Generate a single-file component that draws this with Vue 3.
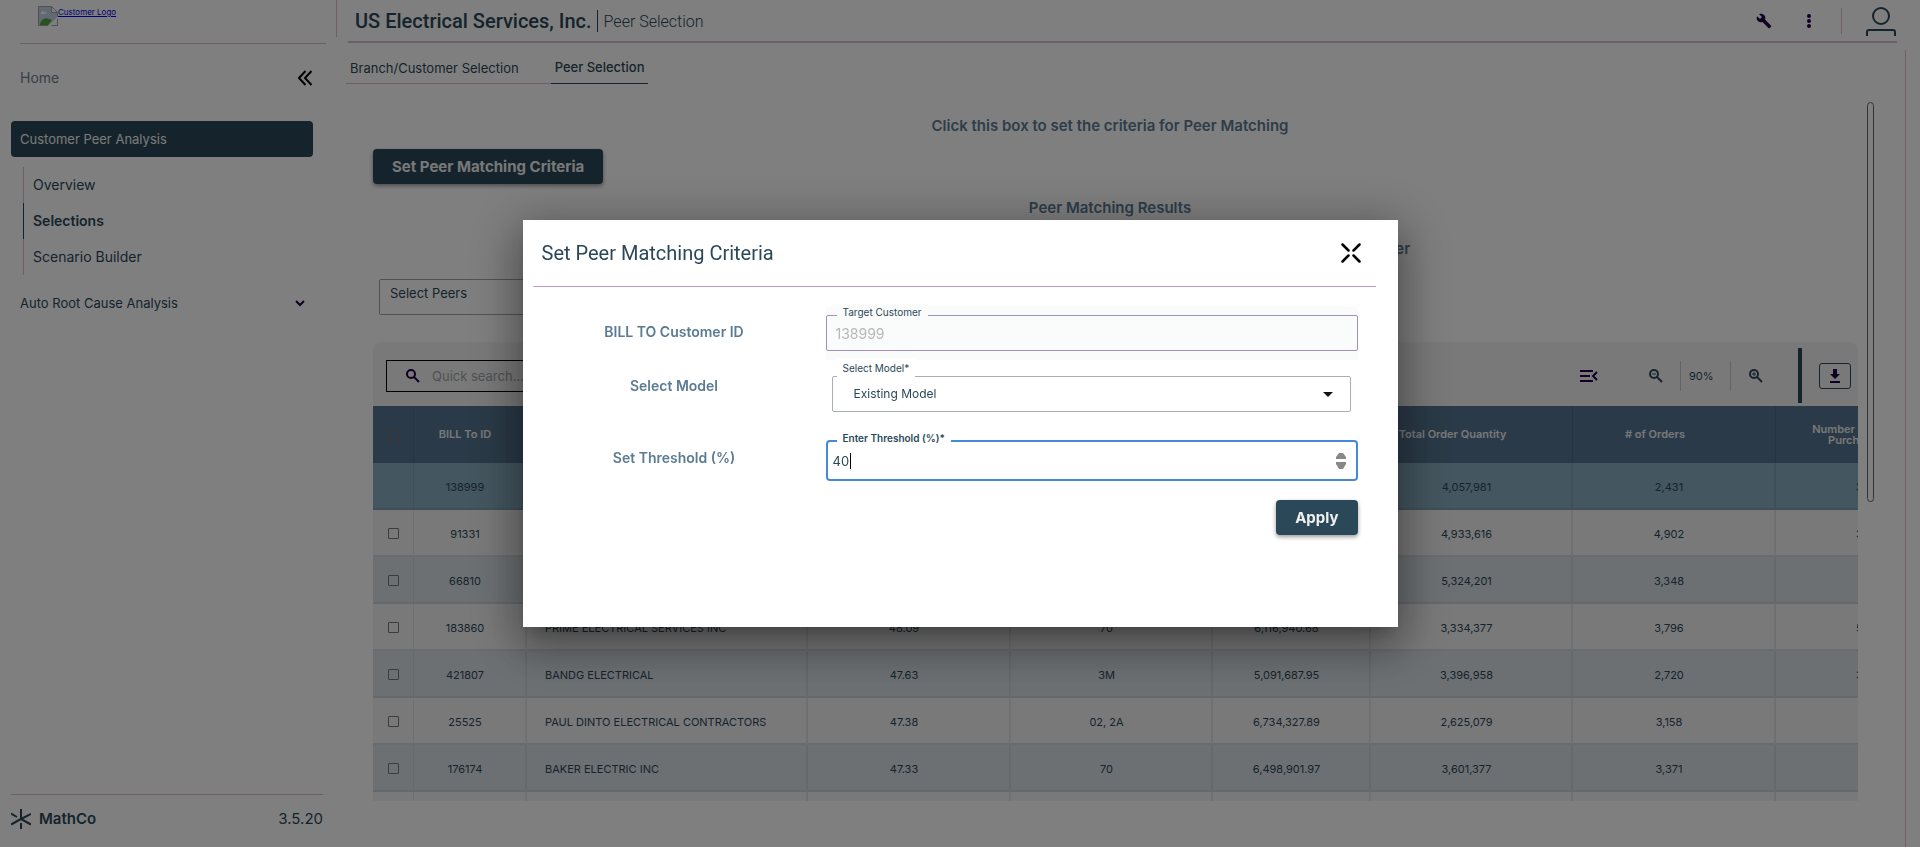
<script setup>
import { ref } from 'vue'

const pages = ['Overview', 'Selections', 'Scenario Builder']
const activePage = 'Selections'

const columns = [
  { key: 'id', label: 'BILL To ID' },
  { key: 'name', label: 'Customer Name' },
  { key: 'score', label: 'Similarity Score' },
  { key: 'branch', label: 'Branch' },
  { key: 'sales', label: 'Total Sales' },
  { key: 'quantity', label: 'Total Order Quantity' },
  { key: 'orders', label: '# of Orders' },
  { key: 'items', label: 'Number of Items Purchased' },
]

const rows = [
  { id: '138999', name: 'TARGET CUSTOMER', score: '', branch: '70', sales: '6,902,114.20', quantity: '4,057,981', orders: '2,431', items: '3,640', target: true },
  { id: '91331', name: 'ELECTRICAL SERVICES', score: '48.61', branch: '70', sales: '6,514,380.12', quantity: '4,933,616', orders: '4,902', items: '3,028' },
  { id: '66810', name: 'ELECTRICAL CONTRACTORS', score: '48.20', branch: '3M', sales: '5,880,417.53', quantity: '5,324,201', orders: '3,348', items: '984' },
  { id: '183860', name: 'PRIME ELECTRICAL SERVICES INC', score: '48.09', branch: '70', sales: '6,116,940.68', quantity: '3,334,377', orders: '3,796', items: '5,240' },
  { id: '421807', name: 'BANDG ELECTRICAL', score: '47.63', branch: '3M', sales: '5,091,687.95', quantity: '3,396,958', orders: '2,720', items: '3,062' },
  { id: '25525', name: 'PAUL DINTO ELECTRICAL CONTRACTORS', score: '47.38', branch: '02, 2A', sales: '6,734,327.89', quantity: '2,625,079', orders: '3,158', items: '917' },
  { id: '176174', name: 'BAKER ELECTRIC INC', score: '47.33', branch: '70', sales: '6,498,901.97', quantity: '3,601,377', orders: '3,371', items: '952' },
  { id: '', name: '', score: '', branch: '', sales: '', quantity: '', orders: '', items: '' },
]

const customer = ref('138999')
const model = ref('Existing Model')
const threshold = ref(40)
</script>

<template>
  <div class="app">
    <aside class="sidebar">
      <div class="brand">
        <a href="#" class="brand-link">
          <svg width="20" height="20" viewBox="0 0 20 20" aria-hidden="true">
            <path d="M.5.5h13l6 6v6l-7 7H.5z" fill="#c3d3ea" stroke="#a0a0a0" />
            <path d="M13.5.5v6h6z" fill="#fff" stroke="#a0a0a0" />
            <path d="M3 7c0-2 3-2 3-1 2-1 3 1 2 2H3z" fill="#fff" />
            <path d="M2 18c1-4 5-7 9-5l3 1-4 5H2z" fill="#4fa83a" />
            <path d="M20 10 10 20h10z" fill="#fff" />
            <path d="M19.5 13v6.500h-6" fill="none" stroke="#a0a0a0" />
          </svg>
          <span>Customer Logo</span>
        </a>
      </div>

      <nav class="nav">
        <div class="nav-home">
          <a href="#">Home</a>
          <button type="button" class="bare" aria-label="Collapse menu">
            <svg width="16" height="16" viewBox="0 0 16 16" fill="none" stroke="#000" stroke-width="2">
              <path d="M8.500 1 2 8l6.500 7M14.500 1 8 8l6.500 7" />
            </svg>
          </button>
        </div>
        <button type="button" class="nav-section">Customer Peer Analysis</button>
        <ul class="nav-list">
          <li v-for="page in pages" :key="page" :class="{ active: page === activePage }">
            <a href="#">{{ page }}</a>
          </li>
        </ul>
        <button type="button" class="nav-collapsed">
          <span>Auto Root Cause Analysis</span>
          <svg width="10" height="10" viewBox="0 0 10 10" fill="none" stroke="#220047" stroke-width="2">
            <path d="m1 3 4 4 4-4" />
          </svg>
        </button>
      </nav>

      <footer class="side-footer">
        <svg width="20" height="20" viewBox="0 0 20 20" fill="none" stroke="#2b4858" stroke-width="2">
          <path d="M10 0v10M10 14v6M10 10 0 15.500M10 10l10-5M10 10l10 5.500M0 4.500l6 3.500" />
        </svg>
        <strong>MathCo</strong>
        <span class="version">3.5.20</span>
      </footer>
    </aside>

    <div class="page">
      <header class="topbar">
        <h1>US Electrical Services, Inc.</h1>
        <span class="crumb">Peer Selection</span>
        <div class="top-actions">
          <button type="button" class="bare" aria-label="Settings">
            <svg width="16" height="16" viewBox="0 0 24 24" fill="#220047">
              <path d="m22.700 19-9.100-9.100c.9-2.300.4-5-1.500-6.900-2-2-5-2.400-7.400-1.300L9 6 6 9 1.600 4.700C.4 7.100.9 10.100 2.900 12.100c1.900 1.900 4.600 2.400 6.900 1.500l9.100 9.100c.4.4 1 .4 1.400 0l2.300-2.300c.5-.4.5-1.100.1-1.400z" />
            </svg>
          </button>
          <button type="button" class="bare" aria-label="More">
            <svg width="16" height="16" viewBox="0 0 16 16" fill="#220047">
              <circle cx="8" cy="3" r="2" /><circle cx="8" cy="8" r="2" /><circle cx="8" cy="13" r="2" />
            </svg>
          </button>
          <span class="divider"></span>
          <button type="button" class="bare" aria-label="Account">
            <svg width="30" height="30" viewBox="0 0 30 30" fill="none" stroke="#2b4858" stroke-width="2">
              <circle cx="15" cy="10" r="8" /><path d="M1 30v-4q0-2 2-2h24q2 0 2 2v4" />
            </svg>
          </button>
        </div>
      </header>

      <main class="body">
        <div class="content">
          <nav class="tabs">
            <a href="#">Branch/Customer Selection</a>
            <a href="#" class="active">Peer Selection</a>
          </nav>

          <section class="peer">
            <h2 class="hint">Click this box to set the criteria for Peer Matching</h2>
            <button type="button" class="primary">Set Peer Matching Criteria</button>
            <h2 class="results">Peer Matching Results</h2>
            <p class="note">Select the peers from the table below to compare them against the target customer</p>
            <button type="button" class="peer-select">Select Peers</button>

            <div class="panel">
              <div class="toolbar">
                <label class="search">
                  <svg width="14" height="14" viewBox="0 0 14 14" fill="none" stroke="#220047" stroke-width="2">
                    <circle cx="5" cy="5" r="4" /><path d="m8 8 5 5" />
                  </svg>
                  <input type="search" placeholder="Quick search..." aria-label="Quick search" />
                </label>
                <button type="button" class="bare menu-icon" aria-label="Columns">
                  <svg width="18" height="14" viewBox="0 0 18 14" fill="none" stroke="#220047" stroke-width="2">
                    <path d="M0 2h13M0 7h10M0 12h13M17 3l-4 4 4 4" />
                  </svg>
                </button>
                <button type="button" class="bare zoom-out" aria-label="Zoom out">
                  <svg width="14" height="14" viewBox="0 0 14 14" fill="none" stroke="#2b4858" stroke-width="2">
                    <circle cx="5" cy="5" r="4" /><path d="m8 8 5 5" /><path d="M3 5h4" stroke-width="1" />
                  </svg>
                </button>
                <span class="zoom-level">90%</span>
                <button type="button" class="bare zoom-in" aria-label="Zoom in">
                  <svg width="14" height="14" viewBox="0 0 14 14" fill="none" stroke="#2b4858" stroke-width="2">
                    <circle cx="5" cy="5" r="4" /><path d="m8 8 5 5" /><path d="M3 5h4M5 3v4" stroke-width="1" />
                  </svg>
                </button>
                <span class="bar"></span>
                <button type="button" class="download" aria-label="Download">
                  <svg width="12" height="14" viewBox="0 0 12 14" fill="#220047">
                    <path d="M4 0h4v5h3l-5 5-5-5h3zM1 12h10v2H1z" />
                  </svg>
                </button>
              </div>

              <div class="table-wrap">
                <table>
                  <colgroup>
                    <col class="c-check" />
                    <col v-for="c in columns" :key="c.key" :class="'c-' + c.key" />
                  </colgroup>
                  <thead>
                    <tr>
                      <th class="check"><input type="checkbox" aria-label="Select all" /></th>
                      <th v-for="c in columns" :key="c.key" :class="c.key">{{ c.label }}</th>
                    </tr>
                  </thead>
                  <tbody>
                    <tr v-for="(row, i) in rows" :key="i" :class="{ target: row.target }">
                      <td class="check">
                        <input v-if="!row.target" type="checkbox" :aria-label="'Select ' + row.id" />
                      </td>
                      <td v-for="c in columns" :key="c.key" :class="c.key">{{ row[c.key] }}</td>
                    </tr>
                  </tbody>
                </table>
              </div>
            </div>
          </section>
        </div>
        <div class="scroll-track"><div class="scroll-thumb"></div></div>
      </main>
    </div>

    <div class="overlay">
      <form class="dialog" role="dialog" aria-labelledby="dialog-title" @submit.prevent>
        <header class="dialog-head">
          <h2 id="dialog-title">Set Peer Matching Criteria</h2>
          <button type="button" class="bare" aria-label="Close">
            <svg width="20" height="20" viewBox="0 0 20 20" fill="none" stroke="#000" stroke-width="2.500" stroke-linecap="round">
              <path d="m1.500 1.500 6 6M18.500 1.500l-6 6M1.500 18.500l6-6M18.500 18.500l-6-6" />
            </svg>
          </button>
        </header>

        <div class="row">
          <span class="row-name">BILL TO Customer ID</span>
          <div class="field disabled">
            <label for="customer">Target Customer</label>
            <input id="customer" v-model="customer" type="text" disabled />
          </div>
        </div>
        <div class="row">
          <span class="row-name">Select Model</span>
          <div class="field model">
            <label for="model">Select Model*</label>
            <select id="model" v-model="model">
              <option>Existing Model</option>
            </select>
            <svg class="arrow" width="10" height="5" viewBox="0 0 10 5" aria-hidden="true"><path d="M0 0h10L5 5z" fill="#111" /></svg>
          </div>
        </div>
        <div class="row last">
          <span class="row-name">Set Threshold (%)</span>
          <div class="field focused">
            <label for="threshold">Enter Threshold (%)*</label>
            <input id="threshold" v-model="threshold" type="number" />
            <span class="caret"></span>
            <svg class="spin" width="10" height="16" viewBox="0 0 10 16" aria-hidden="true">
              <path d="M0 6V4l3-4h4l3 4v2zM0 9h10v2l-3 5H3l-3-5z" fill="#888" />
            </svg>
          </div>
        </div>
        <div class="dialog-actions">
          <button type="submit" class="primary">Apply</button>
        </div>
      </form>
    </div>
  </div>
</template>

<style>
body {
  margin: 0;
  background: #fff;
}
</style>

<style scoped>
* {
  box-sizing: border-box;
}

.app {
  display: flex;
  height: 100vh;
  overflow: hidden;
  font-family: Inter, "Noto Sans", sans-serif;
  font-size: 13px;
  line-height: 20px;
  color: #2b4858;
}

h1, h2, p, ul {
  margin: 0;
  padding: 0;
}

a {
  color: inherit;
  text-decoration: none;
}

button, input, select {
  font: inherit;
  color: inherit;
}

button {
  cursor: pointer;
}

svg {
  display: block;
  flex: none;
}

.bare {
  display: flex;
  padding: 0;
  border: 0;
  background: none;
}

/* sidebar */
.sidebar {
  display: flex;
  flex: none;
  flex-direction: column;
  width: 337px;
}

.brand {
  height: 44px;
  margin: 0 11px 0 20px;
  padding: 6px 18px 0;
  border-bottom: 1px solid #d9bcd5;
}

.brand-link {
  display: inline-flex;
  font-size: 8px;
  line-height: 12px;
  color: #00e;
  text-decoration: underline;
}

.nav {
  flex: 1;
  padding: 24px 24px 0 11px;
}

.nav-home {
  display: flex;
  align-items: center;
  justify-content: space-between;
  padding-left: 9px;
  font-size: 14px;
  color: #6c8290;
}

.nav-section {
  display: block;
  width: 100%;
  height: 36px;
  margin-top: 33px;
  padding: 0 9px;
  border: 0;
  border-radius: 4px;
  background: #2b4858;
  color: #f2f2f2;
  text-align: left;
}

.nav-list {
  margin: 10px 0 0 12px;
  list-style: none;
  font-size: 14px;
}

.nav-list li {
  height: 36px;
  padding-left: 9px;
  border-left: 1px solid #d9bcd5;
  line-height: 36px;
}

.nav-list .active {
  border-color: #2b4858;
  font-weight: 600;
}

.nav-collapsed {
  display: flex;
  align-items: center;
  justify-content: space-between;
  width: 100%;
  margin-top: 18px;
  padding: 0 8px 0 9px;
  border: 0;
  background: none;
}

.side-footer {
  display: flex;
  align-items: center;
  gap: 8px;
  height: 53px;
  margin: 0 14px 0 11px;
  padding-bottom: 4px;
  border-top: 1px solid #d9bcd5;
  font-size: 15px;
}

.side-footer strong {
  font-weight: 600;
}

.version {
  margin-left: auto;
}

/* top bar */
.page {
  display: flex;
  flex: 1;
  flex-direction: column;
  min-width: 0;
}

.topbar {
  display: flex;
  align-items: center;
  height: 43px;
  margin: 0 23px 0 11px;
  padding-left: 7px;
  border-bottom: 2px solid #d9bcd5;
  font-family: Roboto, sans-serif;
}

.topbar::before {
  content: "";
  position: absolute;
  top: 0;
  left: 336px;
  width: 1px;
  height: 37px;
  background: #d9bcd5;
}

.topbar h1 {
  font-size: 20px;
  font-weight: 500;
  line-height: 24px;
}

.crumb {
  margin-left: 5px;
  padding: 2px 0 0 6px;
  border-left: 1px solid #2b4858;
  font-size: 16px;
  font-weight: 300;
  line-height: 20px;
}

.top-actions {
  display: flex;
  align-items: center;
  gap: 24px;
  margin-left: auto;
  padding-right: 1px;
}

.top-actions button:first-child {
  margin-right: 5px;
}

.divider {
  width: 1px;
  height: 26px;
  background: #d9bcd5;
}

/* body */
.body {
  display: flex;
  flex: 1;
  gap: 9px;
  min-height: 0;
  margin: 7px 14px 0 9px;
  border-right: 1px solid #d9bcd5;
}

.content {
  display: flex;
  flex: 1;
  flex-direction: column;
  min-width: 0;
}

.tabs {
  display: flex;
  height: 34px;
  line-height: 36px;
}

.tabs a {
  padding: 0 32px 0 4px;
  border-bottom: 1px solid #d9bcd5;
}

.tabs .active {
  padding: 0 4px;
  border-color: #2b4858;
  font-weight: 500;
  line-height: 34px;
}

.peer {
  display: flex;
  flex: 1;
  flex-direction: column;
  align-items: flex-start;
  min-height: 0;
  padding: 32px 0 46px 27px;
}

.hint, .results, .note {
  width: 100%;
  padding-right: 11px;
  font-size: 15px;
  font-weight: 600;
  text-align: center;
  color: #5b7b93;
}

.primary {
  height: 35px;
  padding: 0 19px;
  border: 0;
  border-radius: 4px;
  background: #2b4858;
  box-shadow: 0 2px 4px rgba(0, 0, 0, 0.4);
  font-size: 15px;
  font-weight: 700;
  color: #f0f0f0;
}

.hint {
  margin-bottom: 13px;
}

.results {
  margin-top: 14px;
}

.note {
  margin-top: 21px;
}

.peer-select {
  width: 300px;
  height: 36px;
  margin: 20px 0 27px 6px;
  padding: 0 10px 8px;
  border: 1px solid #a5a5a5;
  border-radius: 2px;
  background: none;
  font-size: 13px;
  text-align: left;
}

/* table panel */
.panel {
  display: flex;
  flex: 1;
  flex-direction: column;
  width: 100%;
  min-height: 0;
  overflow: hidden;
  border-radius: 8px 8px 0 0;
}

.toolbar {
  display: flex;
  flex: none;
  align-items: center;
  height: 64px;
  padding: 3px 7px 0 13px;
  background: #f3f3f3;
}

.search {
  display: flex;
  align-items: center;
  gap: 12px;
  width: 300px;
  height: 32px;
  padding-left: 19px;
  border: 1px solid #000;
}

.search input {
  flex: 1;
  min-width: 0;
  padding: 0;
  border: 0;
  outline: 0;
  background: none;
}

.search input::placeholder {
  color: #a0a4a8;
}

.menu-icon {
  margin-left: auto;
}

.zoom-out {
  margin: 0 17px 0 51px;
}

.zoom-level {
  width: 51px;
  padding-left: 8px;
  border: solid #c8c8c8;
  border-width: 0 1px;
  font-size: 11px;
  line-height: 30px;
}

.zoom-in {
  margin: 0 35px 0 18px;
}

.bar {
  width: 4px;
  height: 55px;
  background: #2b4858;
}

.download {
  display: flex;
  align-items: center;
  justify-content: center;
  width: 32px;
  height: 26px;
  margin-left: 17px;
  padding: 0;
  border: 1px solid #2b4858;
  border-radius: 3px;
  background: none;
}

.table-wrap {
  flex: 1;
  min-height: 0;
  overflow: hidden;
}

table {
  width: 1604px;
  table-layout: fixed;
  border-collapse: separate;
  border-spacing: 0;
  font-family: Inter, sans-serif;
  font-size: 11px;
  line-height: 14px;
}

.c-check { width: 41px; }
.c-id { width: 113px; }
.c-name { width: 281px; }
.c-score { width: 203px; }
.c-branch { width: 202px; }
.c-sales { width: 158px; }
.c-quantity { width: 202px; }
.c-orders { width: 203px; }

th {
  height: 57px;
  padding: 0 38px 0 0;
  border-right: 1px solid #4b6882;
  background: #557490;
  font-weight: 600;
  line-height: 11px;
  color: #f0f0f0;
}

th.items {
  padding: 0 70px 0 31px;
}

th.id {
  padding: 0 10px 0 0;
}

td {
  height: 47px;
  padding: 2px 9px 0 0;
  border-right: 2px solid #dde1e4;
  border-bottom: 2px solid #d3d8dc;
  background: #f2f2f4;
  text-align: center;
}

tr:nth-child(odd) td {
  border-color: #cbd2d6;
}

tbody tr:nth-child(odd) td {
  background: #d9e1e5;
}

tbody tr.target td {
  border-color: #809fae;
  background: #88acbe;
}

td.name {
  padding-left: 18px;
  text-align: left;
}

th.check, td.check {
  padding: 2px 0 0;
  border-right-width: 1px;
}

.check input {
  display: block;
  width: 11px;
  height: 11px;
  margin: 0 auto;
  border: 1px solid #767676;
  border-radius: 1px;
  appearance: none;
}

th.check input {
  border-color: #766c68;
}

.scroll-track {
  width: 38px;
  padding-top: 52px;
}

.scroll-thumb {
  width: 7px;
  height: 400px;
  border: 1px solid #666;
  border-radius: 4px;
}

/* dialog */
.overlay {
  position: fixed;
  inset: 0;
  display: flex;
  align-items: center;
  justify-content: center;
  background: rgba(0, 0, 0, 0.5);
}

.dialog {
  width: 875px;
  max-width: 92vw;
  padding: 0 40px 92px 0;
  background: #fff;
  box-shadow: 0 11px 15px -7px rgba(0, 0, 0, 0.2), 0 24px 38px 3px rgba(0, 0, 0, 0.14), 0 9px 46px 8px rgba(0, 0, 0, 0.3);
}

.dialog-head {
  display: flex;
  align-items: center;
  justify-content: space-between;
  height: 67px;
  margin: 0 -18px 19px 10px;
  padding: 0 15px 0 9px;
  border-bottom: 1px solid #c29bc2;
}

.dialog-head h2 {
  font-family: Roboto, sans-serif;
  font-size: 20px;
  font-weight: 400;
  line-height: 24px;
}

.row {
  display: grid;
  grid-template-columns: 303fr 532fr;
  align-items: start;
}

.row-name {
  padding-top: 16px;
  font-size: 14px;
  font-weight: 600;
  text-align: center;
  color: #5b7b93;
}

.field {
  position: relative;
}

.field label {
  position: absolute;
  top: -2px;
  left: 11px;
  padding: 0 6px;
  background: #fff;
  font-size: 10px;
  line-height: 16px;
}

.field input, .field select {
  display: block;
  width: 100%;
  height: 36px;
  padding: 0 9px;
  border: 1px solid #a391b5;
  border-radius: 2px;
  outline: 0;
  background: none;
  appearance: none;
}

.field.disabled {
  padding: 9px 0;
  background: #fafbfb;
}

.field.disabled label {
  background: #fafbfb;
}

.disabled input {
  font-size: 14px;
  color: #b8b8b8;
}

.model {
  margin: 0 7px 0 6px;
  padding-top: 16px;
}

.model label {
  left: 5px;
  line-height: 20px;
}

.field select {
  padding-left: 21px;
  border-color: #a7aeb7;
  font-size: 12px;
}

.arrow {
  position: absolute;
  top: 32px;
  right: 18px;
}

.last {
  margin-top: 18px;
}

.last .row-name {
  padding-top: 18px;
}

.focused {
  padding-top: 10px;
}

.focused label {
  top: 0;
  font-weight: 600;
}

.field.focused input {
  height: 41px;
  padding: 0 5px;
  border: 2px solid #4789d8;
  border-radius: 4px;
  appearance: textfield;
  caret-color: transparent;
}

.focused input::-webkit-inner-spin-button {
  display: none;
}

.caret {
  position: absolute;
  top: 23px;
  left: 24px;
  width: 1px;
  height: 16px;
  background: #000;
}

.spin {
  position: absolute;
  top: 23px;
  right: 12px;
}

.dialog-actions {
  display: flex;
  justify-content: flex-end;
  margin-top: 19px;
}
</style>
